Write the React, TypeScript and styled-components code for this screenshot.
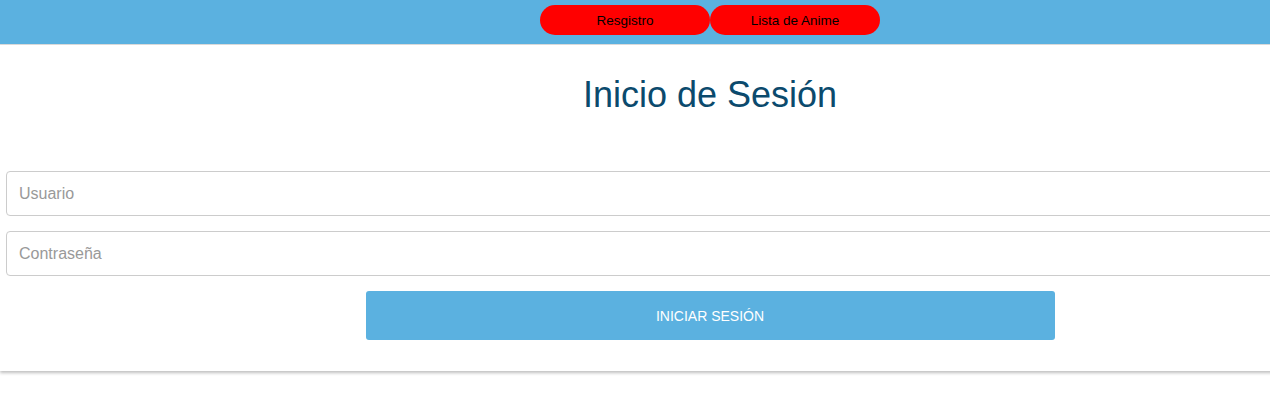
import React from "react";
import styled, { createGlobalStyle } from "styled-components";

const Global = createGlobalStyle`
  html, body {
    margin: 0;
    padding: 0;
    height: 100%;
    background: #ffffff;
    overflow: hidden;
    font-family: "Liberation Sans", Arial, sans-serif;
  }
`;

const Page = styled.div`
  width: 1420px;
`;

const Header = styled.header`
  height: 45px;
  background: #5bb1e0;
  border-bottom: 1px solid #dcdcdc;
  display: flex;
  justify-content: center;
  align-items: flex-start;
  padding-top: 5px;
  box-sizing: border-box;
`;

const NavButton = styled.button`
  width: 170px;
  height: 30px;
  border: none;
  border-radius: 15px;
  background: #ff0000;
  color: #000000;
  font-family: "Liberation Sans", Arial, sans-serif;
  font-size: 13.5px;
  padding: 0;
  cursor: pointer;
`;

const Card = styled.main`
  background: #ffffff;
  box-shadow: 0 2px 3px rgba(0, 0, 0, 0.25);
  padding: 29px 0 31px;
  display: flex;
  flex-direction: column;
  align-items: center;
`;

const Title = styled.h1`
  margin: 0 0 56px;
  font-size: 36px;
  line-height: 41px;
  font-weight: 400;
  color: #0b4a6d;
`;

const Form = styled.form`
  width: 100%;
  display: flex;
  flex-direction: column;
  align-items: center;
  gap: 15px;
`;

const Input = styled.input`
  box-sizing: border-box;
  width: calc(100% - 12px);
  height: 45px;
  border: 1px solid #cccccc;
  border-radius: 4px;
  padding: 0 12px;
  font-family: "Liberation Sans", Arial, sans-serif;
  font-size: 16px;
  color: #333;
  outline: none;
  &::placeholder {
    color: #999999;
  }
`;

const Submit = styled.button`
  width: 689px;
  height: 49px;
  border: none;
  border-radius: 3px;
  background: #5bb1e0;
  color: #ffffff;
  font-family: "Liberation Sans", Arial, sans-serif;
  font-size: 14px;
  cursor: pointer;
`;

export default function App() {
  return (
    <Page>
      <Global />
      <Header>
        <NavButton>Resgistro</NavButton>
        <NavButton>Lista de Anime</NavButton>
      </Header>
      <Card>
        <Title>Inicio de Sesión</Title>
        <Form onSubmit={(e) => e.preventDefault()}>
          <Input type="text" placeholder="Usuario" />
          <Input type="password" placeholder="Contraseña" />
          <Submit type="submit">INICIAR SESIÓN</Submit>
        </Form>
      </Card>
    </Page>
  );
}
